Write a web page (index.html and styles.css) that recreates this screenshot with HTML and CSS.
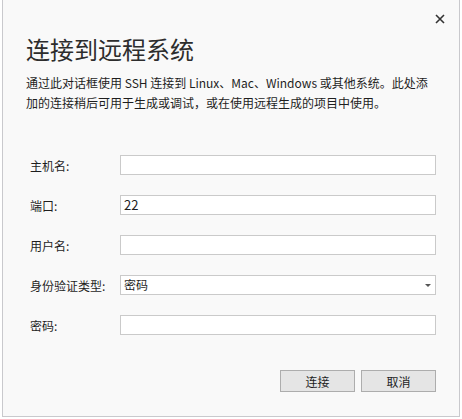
FILE: index.html
```html
<!DOCTYPE html>
<html lang="zh-CN">
<head>
<meta charset="utf-8">
<link rel="stylesheet" href="styles.css">
</head>
<body>
<div class="dialog">
  <div class="topbar">
    <button class="close" aria-label="关闭">
      <svg width="10" height="10" viewBox="0 0 10 10"><path d="M1 1 L9 9 M9 1 L1 9" stroke="#333" stroke-width="1.6" fill="none"/></svg>
    </button>
  </div>
  <h1 class="title">连接到远程系统</h1>
  <p class="desc">通过此对话框使用 SSH 连接到 Linux、Mac、Windows 或其他系统。此处添加的连接稍后可用于生成或调试，或在使用远程生成的项目中使用。</p>
  <div class="form">
    <div class="row"><label class="lbl">主机名:</label><div class="field"></div></div>
    <div class="row"><label class="lbl">端口:</label><div class="field">22</div></div>
    <div class="row"><label class="lbl">用户名:</label><div class="field"></div></div>
    <div class="row"><label class="lbl">身份验证类型:</label><div class="field select"><span>密码</span><span class="arrow"></span></div></div>
    <div class="row"><label class="lbl">密码:</label><div class="field"></div></div>
  </div>
  <div class="buttons">
    <button class="btn">连接</button>
    <button class="btn">取消</button>
  </div>
</div>
</body>
</html>
```

FILE: styles.css
```css
html, body {
  margin: 0;
  padding: 0;
  background: #ffffff;
}
body {
  width: 462px;
  height: 419px;
  overflow: hidden;
  font-family: "Noto Sans CJK SC", "Noto Sans", sans-serif;
  color: #1e1e1e;
}
.dialog {
  box-sizing: border-box;
  margin-left: 2px;
  width: 458px;
  height: 417px;
  background: #f9f9f9;
  border: 1px solid #c9c9cd;
  border-top: none;
  padding: 0 23px 0 23px;
  display: flex;
  flex-direction: column;
}
.topbar {
  height: 32px;
  display: flex;
  justify-content: flex-end;
  align-items: flex-end;
}
.close {
  border: none;
  background: transparent;
  padding: 0;
  margin-right: -9px;
  width: 10px;
  height: 10px;
  display: flex;
  margin-bottom: 8px;
}
.title {
  margin: 0;
  font-size: 24px;
  font-weight: normal;
  line-height: 34px;
  color: #2d2d2d;
}
.desc {
  margin: 7px 0 0 0;
  font-size: 12px;
  line-height: 20px;
  width: 412px;
  color: #1e1e1e;
}
.form {
  margin-top: 42px;
  display: flex;
  flex-direction: column;
  gap: 20px;
  padding-left: 4px;
}
.row {
  display: flex;
  align-items: center;
  height: 20px;
}
.lbl {
  width: 90px;
  font-size: 12px;
  line-height: 20px;
  padding-top: 2px;
}
.field {
  box-sizing: border-box;
  width: 316px;
  height: 20px;
  background: #ffffff;
  border: 1px solid #cacaca;
  font-size: 13px;
  line-height: 18px;
  padding-left: 3px;
  display: flex;
  align-items: center;
}
.select {
  justify-content: space-between;
  padding-right: 4px;
  font-size: 12px;
}
.arrow {
  width: 0;
  height: 0;
  border-left: 3px solid transparent;
  border-right: 3px solid transparent;
  border-top: 3px solid #555;
}
.buttons {
  margin-top: auto;
  margin-bottom: 24px;
  display: flex;
  justify-content: flex-end;
  gap: 6px;
}
.btn {
  box-sizing: border-box;
  width: 75px;
  height: 22px;
  background: #e5e5e5;
  border: 1px solid #adadad;
  font-family: "Noto Sans CJK SC", sans-serif;
  font-size: 12px;
  color: #1e1e1e;
  padding: 0;
}
```
